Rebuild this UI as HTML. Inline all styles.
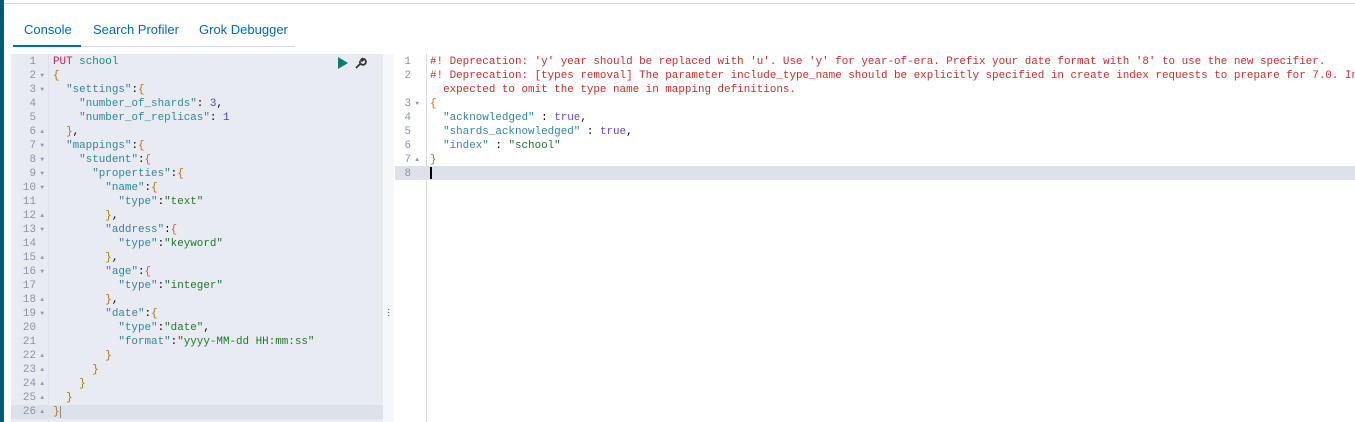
<!DOCTYPE html><html><head><style>
body{margin:0;width:1355px;height:422px;background:#fff;position:relative;overflow:hidden;font-family:"Liberation Sans",sans-serif}
.strip{position:absolute;left:0;top:0;width:4px;height:422px;background:#015a73}
.topline{position:absolute;left:4px;right:0;top:3px;height:1px;background:#d3dae6}
.tabs{position:absolute;left:13px;top:14px;width:282px;height:32px;border-bottom:1px solid #d3dae6;font-size:13px;color:#006bb4}
.tab{position:absolute;top:8px}
.ul{position:absolute;left:13px;top:45px;width:68px;height:2px;background:#006bb4}
.pane{position:absolute;font-family:"Liberation Mono",monospace;font-size:10.9px;line-height:14px;white-space:pre}
.l{position:absolute;left:11px;top:54px;width:372px;height:368px;background:#e8ebf2}
.ls{position:absolute;left:383px;top:54px;width:11px;height:368px;background:#f5f7fa}
.g{position:absolute;color:#8b95a5;white-space:normal;font-family:"Liberation Mono",monospace;font-size:10.9px;line-height:14px}
.g div{height:14px;text-align:right;position:relative;padding-right:8px}
.g div i{position:absolute;right:0;top:0;font-style:normal;font-size:6px;line-height:14px}
.act{position:absolute;background:#dde1e9;height:14px}
.k{color:#31869c}.s{color:#1d7a25}.n{color:#4b45c9}.b{color:#b8710a}.p{color:#c61e59}.u{color:#168c85}.d{color:#c1312b}.t{color:#6a45c9}
.vline{position:absolute;left:426px;top:54px;width:1px;height:368px;background:#d3dae6}
</style></head><body>
<div class="strip"></div><div class="topline"></div>
<div class="tabs"><span class="tab" style="left:11px">Console</span><span class="tab" style="left:80px">Search Profiler</span><span class="tab" style="left:186px">Grok Debugger</span></div>
<div class="ul"></div>
<div class="l"></div><div class="ls"></div>
<div class="act" style="left:11px;top:405px;width:372px"></div>
<div style="position:absolute;left:48px;top:54px;width:1px;height:368px;background:#dde1e9"></div>
<div class="g" style="left:12px;top:55px;width:32px"><div>1</div><div>2<i>▼</i></div><div>3<i>▼</i></div><div>4</div><div>5</div><div>6<i>▲</i></div><div>7<i>▼</i></div><div>8<i>▼</i></div><div>9<i>▼</i></div><div>10<i>▼</i></div><div>11</div><div>12<i>▲</i></div><div>13<i>▼</i></div><div>14</div><div>15<i>▲</i></div><div>16<i>▼</i></div><div>17</div><div>18<i>▲</i></div><div>19<i>▼</i></div><div>20</div><div>21</div><div>22<i>▲</i></div><div>23<i>▲</i></div><div>24<i>▲</i></div><div>25<i>▲</i></div><div>26<i>▲</i></div></div>
<div class="pane" style="left:53px;top:55px"><span class="p">PUT</span> <span class="u">school</span>
<span class="b">{</span>
  <span class="k">"settings"</span>:<span class="b">{</span>
    <span class="k">"number_of_shards"</span>: <span class="n">3</span>,
    <span class="k">"number_of_replicas"</span>: <span class="n">1</span>
  <span class="b">}</span>,
  <span class="k">"mappings"</span>:<span class="b">{</span>
    <span class="k">"student"</span>:<span class="b">{</span>
      <span class="k">"properties"</span>:<span class="b">{</span>
        <span class="k">"name"</span>:<span class="b">{</span>
          <span class="k">"type"</span>:<span class="s">"text"</span>
        <span class="b">}</span>,
        <span class="k">"address"</span>:<span class="b">{</span>
          <span class="k">"type"</span>:<span class="s">"keyword"</span>
        <span class="b">}</span>,
        <span class="k">"age"</span>:<span class="b">{</span>
          <span class="k">"type"</span>:<span class="s">"integer"</span>
        <span class="b">}</span>,
        <span class="k">"date"</span>:<span class="b">{</span>
          <span class="k">"type"</span>:<span class="s">"date"</span>,
          <span class="k">"format"</span>:<span class="s">"yyyy-MM-dd HH:mm:ss"</span>
        <span class="b">}</span>
      <span class="b">}</span>
    <span class="b">}</span>
  <span class="b">}</span>
<span class="b">}</span></div>
<div style="position:absolute;left:60px;top:406px;width:1px;height:12px;background:#888"></div>
<svg style="position:absolute;left:338px;top:57px" width="30" height="12"><path d="M0 0L10 6L0 12Z" fill="#017d73"/><path d="M18 11L23 6M22 4a3 3 0 1 0 4 -2l-2 2-1-1 2-2" stroke="#333" stroke-width="1.8" fill="none"/></svg>
<div style="position:absolute;left:387px;top:308px;color:#444;font-size:10px;line-height:3px">·<br>·<br>·</div>
<div class="vline"></div>
<div class="act" style="left:395px;top:166px;width:960px"></div>
<div class="g" style="left:395px;top:55px;width:24px"><div>1</div><div>2</div><div></div><div>3<i>▼</i></div><div>4</div><div>5</div><div>6</div><div>7<i>▲</i></div><div>8</div></div>
<div style="position:absolute;left:430px;top:54px;width:925px;height:140px;overflow:hidden"><div class="pane" style="left:0;top:1px"><span class="d">#! Deprecation: 'y' year should be replaced with 'u'. Use 'y' for year-of-era. Prefix your date format with '8' to use the new specifier.
#! Deprecation: [types removal] The parameter include_type_name should be explicitly specified in create index requests to prepare for 7.0. In 7.0 include_type_name will default to 'false', and requests are
  expected to omit the type name in mapping definitions.</span>
<span class="b">{</span>
  <span class="k">"acknowledged"</span> : <span class="t">true</span>,
  <span class="k">"shards_acknowledged"</span> : <span class="t">true</span>,
  <span class="k">"index"</span> : <span class="s">"school"</span>
<span class="b">}</span>
</div></div>
<div style="position:absolute;left:430px;top:167px;width:2px;height:12px;background:#000"></div>
</body></html>
